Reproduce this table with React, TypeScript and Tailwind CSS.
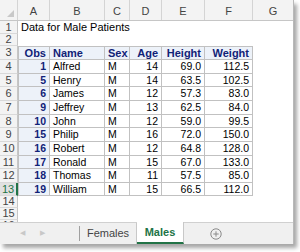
import React from "react";

const rows = [
  [1, "Alfred", "M", 14, "69.0", "112.5"],
  [5, "Henry", "M", 14, "63.5", "102.5"],
  [6, "James", "M", 12, "57.3", "83.0"],
  [9, "Jeffrey", "M", 13, "62.5", "84.0"],
  [10, "John", "M", 12, "59.0", "99.5"],
  [15, "Philip", "M", 16, "72.0", "150.0"],
  [16, "Robert", "M", 12, "64.8", "128.0"],
  [17, "Ronald", "M", 15, "67.0", "133.0"],
  [18, "Thomas", "M", 11, "57.5", "85.0"],
  [19, "William", "M", 15, "66.5", "112.0"],
];
const dataHeights = ["h-[14px]", "h-[13px]", "h-[14px]", "h-[14px]", "h-[13px]", "h-[14px]", "h-[14px]", "h-[13px]", "h-[14px]", "h-[13px]"];

const colW = ["w-[32px]", "w-[55px]", "w-[25px]", "w-[32px]", "w-[43px]", "w-[48px]", "w-[40px]"];
const letters = ["A", "B", "C", "D", "E", "F", "G"];

function RowHdr({ n, h, sel }: { n: number; h: string; sel?: boolean }) {
  return (
    <div
      className={`w-[18px] shrink-0 ${h} flex items-center justify-center border-b border-[#d9d9d9] text-[11px] leading-none ${
        sel ? "bg-[#e1e1e1] text-[#217346] border-r-2 border-r-[#217346]" : "bg-[#f3f3f3] text-[#444] border-r border-r-[#c6c6c6]"
      }`}
    >
      {n}
    </div>
  );
}

export default function App() {
  return (
    <div className="w-[300px] h-[252px] bg-white overflow-hidden font-['Liberation_Sans',Arial,sans-serif]">
      <div className="w-[294px] h-[244px] flex flex-col bg-white border-r border-[#b8b8b8] shadow-[3px_4px_4px_rgba(0,0,0,0.35)]">
        {/* column header */}
        <div className="flex h-[21px] shrink-0 bg-[#f3f3f3] border-b border-[#c6c6c6]">
          <div className="w-[18px] shrink-0 relative border-r border-[#d4d4d4]">
            <div className="absolute right-[3px] bottom-[3px] w-0 h-0 border-l-[7px] border-l-transparent border-b-[7px] border-b-[#c8c8c8]" />
          </div>
          {letters.map((l, i) => (
            <div
              key={l}
              className={`${colW[i]} shrink-0 flex items-end justify-center pb-[3px] text-[11px] leading-none text-[#444] ${i < 6 ? "border-r border-[#d4d4d4]" : ""}`}
            >
              {l}
            </div>
          ))}
        </div>
        {/* grid */}
        <div className="flex-1 overflow-hidden flex flex-col">
          <div className="flex">
            <RowHdr n={1} h="h-[13px]" />
            <div className="flex items-center pl-[3px] text-[11px] leading-none text-black whitespace-nowrap">Data for Male Patients</div>
          </div>
          <div className="flex">
            <RowHdr n={2} h="h-[12px]" />
          </div>
          {/* table header */}
          <div className="flex">
            <RowHdr n={3} h="h-[14px]" />
            {["Obs", "Name", "Sex", "Age", "Height", "Weight"].map((t, i) => (
              <div
                key={t}
                className={`${colW[i]} shrink-0 h-[14px] flex items-center ${
                  i === 0 || i >= 3 ? "justify-end pr-[3px]" : "justify-start pl-[3px]"
                } bg-[#edf2f9] border-t border-r border-b border-[#c1c1c1] ${i === 0 ? "border-l" : ""} text-[11px] leading-none font-bold text-[#112277]`}
              >
                {t}
              </div>
            ))}
          </div>
          {rows.map((r, ri) => (
            <div className="flex" key={ri}>
              <RowHdr n={ri + 4} h={dataHeights[ri]} sel={ri === 9} />
              {r.map((v, i) => (
                <div
                  key={i}
                  className={`${colW[i]} shrink-0 ${dataHeights[ri]} flex items-center ${
                    i === 0 || i >= 3 ? "justify-end pr-[3px]" : "justify-start pl-[3px]"
                  } border-r border-b border-[#c1c1c1] text-[10.5px] leading-none ${
                    i === 0 ? "border-l bg-[#edf2f9] font-bold text-[#112277]" : "text-black"
                  }`}
                >
                  {v}
                </div>
              ))}
            </div>
          ))}
          {[14, 15, 16].map((n) => (
            <div className="flex" key={n}>
              <RowHdr n={n} h="h-[12px]" />
            </div>
          ))}
        </div>
        {/* tab bar */}
        <div className="h-[22px] shrink-0 flex items-stretch bg-[#f0f0f0] border-t border-[#d0d0d0] text-[11px]">
          <div className="w-[79px] shrink-0 flex items-center">
            <span className="ml-[20px] text-[7px] text-[#c8c8c8]">◀</span>
            <span className="ml-[15px] text-[7px] text-[#c8c8c8]">▶</span>
          </div>
          <div className="w-px my-[3px] bg-[#a0a0a0]" />
          <div className="w-[57px] shrink-0 flex items-center justify-center text-[#444] border-r border-[#c8c8c8]">Females</div>
          <div className="w-[47px] shrink-0 -mt-px flex items-center justify-center bg-white font-bold text-[#217346] border-b-2 border-[#217346] border-r border-r-[#c8c8c8]">Males</div>
          <div className="w-[64px] shrink-0 flex items-center justify-center">
            <svg width="12" height="12" viewBox="0 0 12 12">
              <circle cx="6" cy="6" r="5.2" fill="none" stroke="#8a8a8a" strokeWidth="1" />
              <path d="M6 3.3v5.4M3.3 6h5.4" stroke="#8a8a8a" strokeWidth="1" />
            </svg>
          </div>
        </div>
      </div>
    </div>
  );
}
